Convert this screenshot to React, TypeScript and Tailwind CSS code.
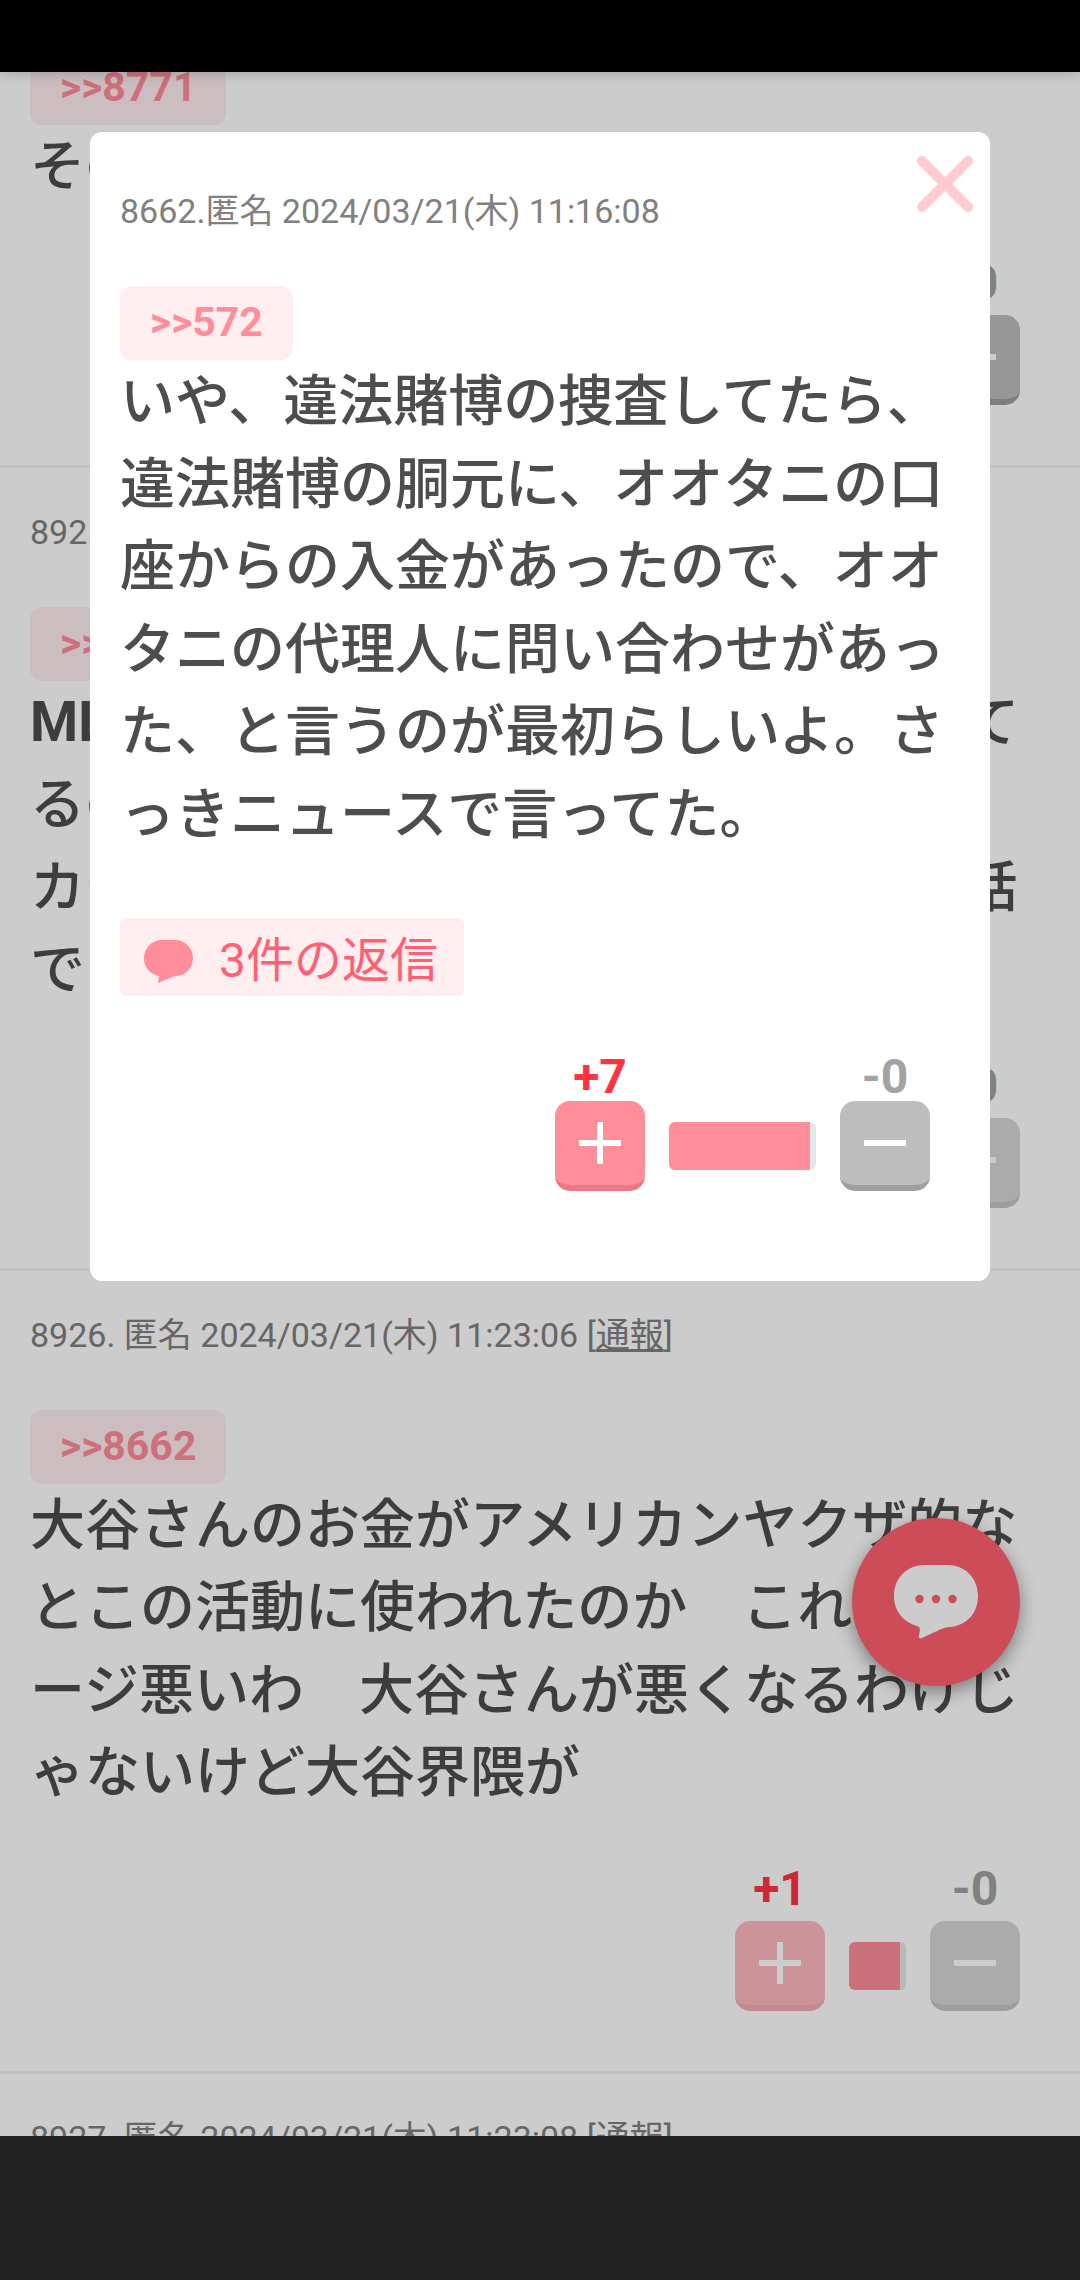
import { useState } from 'react'

interface Comment {
  id: number
  meta?: string
  anchor?: string
  lines: string[]
  plus: string
  minus: string
  barWidth: number
  voted?: boolean
}

const comments: Comment[] = [
  { id: 8924, anchor: '>>8771', lines: ['その通り'], plus: '+2', minus: '-0', barWidth: 90 },
  {
    id: 8925,
    meta: '匿名 2024/03/21(木) 11:22:58',
    anchor: '>>8662',
    lines: ['MLBの調査が入るより前に球団が知って', 'るのは当然だと思うけど、', 'カジノでも違法な賭博をしてたという話', 'で'],
    plus: '+1',
    minus: '-0',
    barWidth: 57,
    voted: true,
  },
  {
    id: 8926,
    meta: '匿名 2024/03/21(木) 11:23:06',
    anchor: '>>8662',
    lines: ['大谷さんのお金がアメリカンヤクザ的なとこの活動に使われたのか　これはイメージ悪いわ　大谷さんが悪くなるわけじゃないけど大谷界隈が'],
    plus: '+1',
    minus: '-0',
    barWidth: 57,
    voted: true,
  },
]

function Anchor({ label }: { label: string }) {
  return (
    <a href="#" className="flex h-[74px] w-fit items-center rounded-xl bg-[#ffeef0] px-[30px] text-[41px] font-bold text-[#ff8d9a]">
      {label}
    </a>
  )
}

function Meta({ id, text, report }: { id: string; text: string; report?: boolean }) {
  return (
    <p className="mb-[51px] text-[34px] leading-[48px] whitespace-nowrap text-[#808080]">
      {id}{text}
      {report && <> [<a href="#" className="underline">通報</a>]</>}
    </p>
  )
}

function Body({ lines }: { lines: string[] }) {
  return (
    <div className="text-[55px] leading-normal font-medium text-[#4d4d4d] [line-break:anywhere]">
      {lines.map((line) => {
        const latin = line.match(/^[A-Z]+/)?.[0] ?? ''
        return (
          <p key={line}>
            {latin && <b>{latin}</b>}
            {line.slice(latin.length)}
          </p>
        )
      })}
    </div>
  )
}

interface VotesProps { plus: string; minus: string; barWidth: number; voted?: boolean; tight?: boolean }

function Votes({ plus, minus, barWidth, voted, tight }: VotesProps) {
  const column = `flex flex-col items-center ${tight ? '' : 'gap-2'}`
  const button = 'flex size-[90px] items-center justify-center rounded-[15px] border-b-[6px]'
  return (
    <div className="flex items-end justify-end gap-6">
      <div className={column}>
        <span className="text-[48px] leading-[48px] font-bold text-[#ff3344]">{plus}</span>
        <button aria-label="プラス" className={`${button} ${voted ? 'border-[#f5adb6] bg-[#ffb9c0]' : 'border-[#ee7785] bg-[#ff8d9a]'}`}>
          <svg viewBox="0 0 42 42" className="size-[42px]" stroke="white" strokeWidth="6">
            <path d="M21 0V42M0 21H42" />
          </svg>
        </button>
      </div>
      <div className="mb-[21px] flex h-12 overflow-hidden rounded-md bg-[#e6e6e6] pr-1.5" style={{ width: barWidth }}>
        <div className="flex-1 bg-[#ff8d9a]" />
      </div>
      <div className={column}>
        <span className="text-[48px] leading-[48px] font-bold text-[#a2a2a2]">{minus}</span>
        <button aria-label="マイナス" className={`${button} ${voted ? 'border-[#c5c5c5] bg-[#d6d6d6]' : 'border-[#9f9f9f] bg-[#bdbdbd]'}`}>
          <svg viewBox="0 0 42 42" className="size-[42px]" stroke="white" strokeWidth="6">
            <path d="M0 21H42" />
          </svg>
        </button>
      </div>
    </div>
  )
}

function CommentItem({ comment }: { comment: Comment }) {
  return (
    <article className={`border-b-[3px] border-[#f2f2f2] px-[30px] pb-[60px] ${comment.meta ? 'pt-10' : ''}`}>
      {comment.meta && <Meta id={`${comment.id}. `} text={comment.meta} report />}
      {comment.anchor && <Anchor label={comment.anchor} />}
      <Body lines={comment.lines} />
      <div className="mt-[51px] pr-[30px]">
        <Votes plus={comment.plus} minus={comment.minus} barWidth={comment.barWidth} voted={comment.voted} />
      </div>
    </article>
  )
}

export default function App() {
  const [open, setOpen] = useState(true)

  return (
    <div className="flex h-screen flex-col bg-[#222] font-[Roboto,'Noto_Sans_CJK_JP',sans-serif]">
      <header className="relative z-10 h-[72px] shrink-0 bg-black shadow-[0_2px_12px_rgba(0,0,0,0.2)]" />

      <main className="relative min-h-0 flex-1 overflow-hidden bg-white">
        {/* scrolled list */}
        <div className="-mt-[21px]">
          {comments.map((c) => <CommentItem key={c.id} comment={c} />)}
          <article className="px-[30px] pt-10">
            <Meta id="8927. " text="匿名 2024/03/21(木) 11:23:08" report />
          </article>
        </div>

        {/* write button */}
        <button
          aria-label="コメントを書く"
          className="absolute right-[60px] bottom-[450px] flex size-[168px] items-center justify-center rounded-full bg-[#ff616f] shadow-[0_6px_18px_rgba(0,0,0,0.4)]"
        >
          <svg viewBox="0 0 84 74" className="h-[74px] w-[84px]">
            <path fill="white" d="M31 0H53C71 0 84 13 84 31C84 48 73 60 57 62C51 62 47 64 43 66L28 73C26 74 24 73 25 70C26 66 27 62 23 61C10 57 0 47 0 31C0 13 13 0 31 0Z" />
            <g fill="#ff616f">
              <circle cx="25.500" cy="34" r="4.200" />
              <circle cx="42" cy="34" r="4.200" />
              <circle cx="58.500" cy="34" r="4.200" />
            </g>
          </svg>
        </button>

        {open && (
          <div className="absolute inset-0 bg-black/20 px-[90px] pt-[60px]">
            <section role="dialog" aria-label="コメント" className="relative rounded-xl bg-white px-[30px] pt-[55px] pb-[90px]">
              <button aria-label="閉じる" onClick={() => setOpen(false)} className="absolute top-6 right-[17px]">
                <svg viewBox="0 0 56 56" className="size-14" stroke="#ffcbd1" strokeWidth="10" strokeLinecap="round">
                  <path d="M5 5L51 51M51 5L5 51" />
                </svg>
              </button>

              <Meta id="8662." text="匿名 2024/03/21(木) 11:16:08" />
              <Anchor label=">>572" />
              <Body lines={['いや、違法賭博の捜査してたら、違法賭博の胴元に、オオタニの口座からの入金があったので、オオタニの代理人に問い合わせがあった、と言うのが最初らしいよ。さっきニュースで言ってた。']} />

              <a href="#" className="mt-[63px] mb-[57px] flex h-[78px] w-fit items-center rounded-md bg-[#ffeef0] pt-2 pr-[26px] pl-6 text-[48px] text-[#ff6073]">
                <svg viewBox="0 0 49 43" className="mr-[26px] h-[43px] w-[49px]" fill="#ff8d9a">
                  <path d="M18 0H31C41 0 49 8 49 18C49 28 42 35 33 36C30 36 28 37 26 38L14 43L15 36C6 34 0 28 0 18C0 8 8 0 18 0Z" />
                </svg>
                3件の返信
              </a>

              <div className="pr-[30px]">
                <Votes plus="+7" minus="-0" barWidth={147} tight />
              </div>
            </section>
          </div>
        )}
      </main>

      <footer className="h-36 shrink-0 bg-[#222]" />
    </div>
  )
}
